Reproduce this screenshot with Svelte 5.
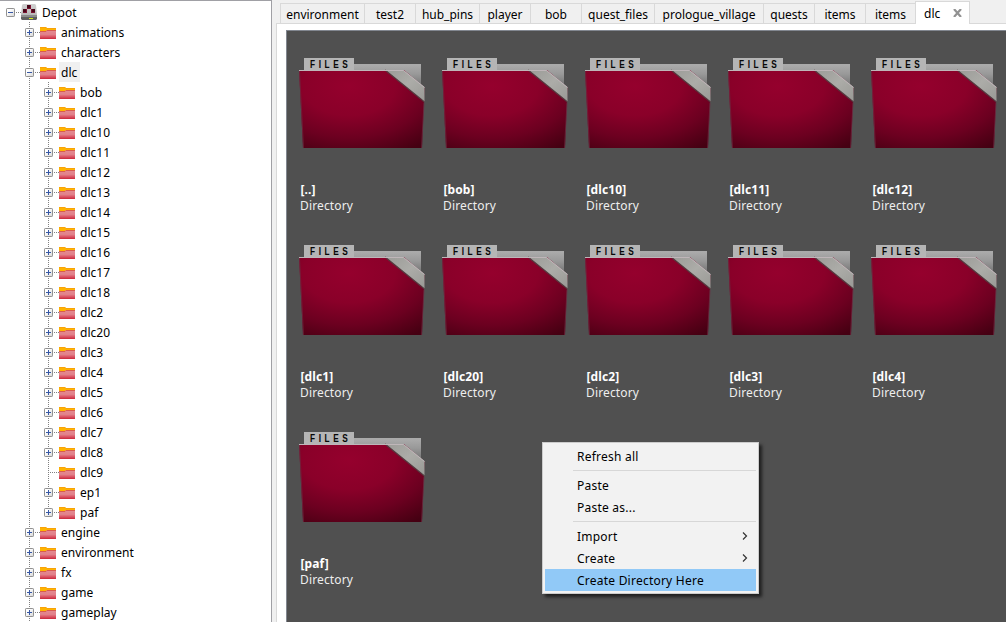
<script>
  const root = { name: 'Depot', level: 0, open: true };
  const node = (name, level, extra = {}) => ({ name, level, ...extra });
  const dlc = ['bob', 'dlc1', 'dlc10', 'dlc11', 'dlc12', 'dlc13', 'dlc14', 'dlc15', 'dlc16', 'dlc17', 'dlc18', 'dlc2', 'dlc20', 'dlc3', 'dlc4', 'dlc5', 'dlc6', 'dlc7', 'dlc8', 'dlc9', 'ep1', 'paf'];
  const rows = [
    root,
    node('animations', 1),
    node('characters', 1),
    node('dlc', 1, { open: true, selected: true }),
    ...dlc.map((n) => node(n, 2, { leaf: n === 'dlc9', last: n === 'paf' })),
    ...['engine', 'environment', 'fx', 'game', 'gameplay'].map((n) => node(n, 1))
  ];
  const tabs = [
    ['environment', 84], ['test2', 51], ['hub_pins', 64], ['player', 51], ['bob', 51], ['quest_files', 73],
    ['prologue_village', 109], ['quests', 51], ['items', 51], ['items', 50]
  ];
  const folders = ['..', 'bob', 'dlc10', 'dlc11', 'dlc12', 'dlc1', 'dlc20', 'dlc2', 'dlc3', 'dlc4', 'paf'];
  const menu = ['Refresh all', null, 'Paste', 'Paste as...', null, 'Import', 'Create', 'Create Directory Here'];
</script>

<svg class="defs" width="0" height="0" aria-hidden="true">
  <defs>
    <linearGradient id="box" x1="0" y1="0" x2="1" y2="1"><stop offset=".3" stop-color="#fff" /><stop offset="1" stop-color="#d5d5d5" /></linearGradient>
    <linearGradient id="mini" x1="0" y1="0" x2="0" y2="1"><stop offset="0" stop-color="#e48c93" /><stop offset=".5" stop-color="#e2808a" /><stop offset="1" stop-color="#d0283d" /></linearGradient>
    <linearGradient id="drive" x1="0" y1="0" x2="0" y2="1"><stop offset="0" stop-color="#d2d2d2" /><stop offset="1" stop-color="#b4b4b4" /></linearGradient>
    <radialGradient id="front" gradientUnits="userSpaceOnUse" cx="50" cy="25" r="116" gradientTransform="matrix(1 0 0 .64 0 12)">
      <stop offset="0" stop-color="#95002d" /><stop offset=".4" stop-color="#8a0029" /><stop offset=".7" stop-color="#6c0020" /><stop offset="1" stop-color="#450012" />
    </radialGradient>
    <linearGradient id="back" x1="0" y1="0" x2="0" y2="1"><stop offset="0" stop-color="#b8b8b8" /><stop offset=".5" stop-color="#999" /><stop offset="1" stop-color="#666" /></linearGradient>
    <linearGradient id="strip" x1="0" y1="0" x2="1" y2="1"><stop offset="0" stop-color="#9b9b97" /><stop offset=".5" stop-color="#acaca8" /><stop offset="1" stop-color="#999995" /></linearGradient>
  </defs>
</svg>

<div class="app">
  <aside class="tree">
    {#each rows as row}
      <div class="row">
        {#if row.level > 0}<span class="guide"></span>{/if}
        {#if row.level === 2}<span class="guide" class:last={row.last}></span>{/if}
        <span class="branch">
          {#if !row.leaf}
            <svg width="9" height="9" viewBox="0 0 9 9">
              <rect x=".5" y=".5" width="8" height="8" rx=".7" fill="url(#box)" stroke="#919191" />
              <path d={row.open ? 'M2 4.5h5' : 'M2 4.5h5M4.5 2v5'} stroke="#3657a5" />
            </svg>
          {/if}
        </span>
        {#if row.level === 0}
          <svg class="icon" width="16" height="16" viewBox="0 0 16 16">
            <path d="M2 0h12l1 1 1 10v2H0v-2L1 1z" fill="url(#drive)" />
            <path d="M0 11.5h16V15l-1 1H1l-1-1z" fill="#606060" /><path d="M0 11.5h16v1.5H0z" fill="#8d8d8d" />
            <path d="M6 1h4v4H6zM2 5h4v4H2zM10 5h4v4h-4z" fill="#7a1230" />
            <path d="M6 1h3v3H6zM2 5h3v3H2zM11 5h3v3h-3z" fill="#480719" />
            <path d="M8 14.5h4" stroke="#d5ef18" />
          </svg>
        {:else}
          <svg class="icon" width="16" height="16" viewBox="0 0 16 16">
            <path d="M0 3h6l1 1h9v11H0z" fill="#ffb400" />
            <path d="M0 3.5h6l1 1h9" fill="none" stroke="#f7a20a" />
            <path d="M0 7h6l1-1h9v9H0z" fill="url(#mini)" />
            <path d="M0 7.5h6l1-1h9" fill="none" stroke="#d95a50" />
            <path d="M0 14.5h16" fill="none" stroke="#cf3044" />
          </svg>
        {/if}
        <span class="name" class:selected={row.selected}>{row.name}</span>
      </div>
    {/each}
  </aside>

  <main>
    <nav>
      {#each tabs as [name, width]}
        <div class="tab" style:width="{width}px">{name}</div>
      {/each}
      <div class="tab active">
        <span>dlc</span>
        <svg width="9" height="8" viewBox="0 0 9 8"><path d="M1 0l7 8M8 0L1 8" stroke="#929292" stroke-width="2.2" /></svg>
      </div>
    </nav>
    <div class="page">
      <div class="grid">
        {#each folders as name}
          <div class="folder">
            <svg width="127" height="91" viewBox="0 0 127 91">
              <path d="M5 0h50v6h67v26H5z" fill="url(#back)" />
              <path d="M5 0h50v12H5z" fill="#b5b5b5" />
              <path d="M55 6h67v1H55z" fill="#aaa" />
              <text transform="translate(11 10) scale(.75 1)">FILES</text>
              <path d="M0 12h105l20.5 17.5L123 90H4z" fill="url(#front)" />
              <path d="M86 12h18.5l21 17v15z" fill="url(#strip)" />
              <path d="M86 12l39.500 32" stroke="#55383e" stroke-width="1.2" fill="none" />
              <path d="M0 12.5h104.5l21 17" stroke="#bfb6b9" fill="none" />
              <path d="M.5 13L4.5 90M125 45l-2.5 45" stroke="#6e2940" stroke-width=".7" fill="none" />
            </svg>
            <b>[{name}]</b>
            <span>Directory</span>
          </div>
        {/each}
      </div>
    </div>
  </main>

  <div class="menu">
    {#each menu as item}
      {#if item === null}
        <div class="sep"></div>
      {:else}
        <div class="item" class:hot={item === 'Create Directory Here'}>
          <span>{item}</span>
          {#if item === 'Import' || item === 'Create'}
            <svg width="6" height="8" viewBox="0 0 6 8"><path d="M1 .5L4.5 4 1 7.500" fill="none" stroke="#333" stroke-width="1.2" /></svg>
          {/if}
        </div>
      {/if}
    {/each}
  </div>
</div>

<style>
  :global(body) { margin: 0; overflow: hidden; }
  .defs { position: absolute; }
  .app {
    display: flex; width: 1006px; height: 622px; overflow: hidden; position: relative;
    background: #f0f0f0; color: #000; font: 12px/20px "Noto Sans", sans-serif; box-sizing: border-box;
  }
  .app :global(*) { box-sizing: border-box; }
  svg { display: block; flex: none; }
  .tree { width: 272px; flex: none; background: #fff; border-top: 1px solid #a0a0a5; border-right: 1px solid #a0a0a5; padding-top: 1px; overflow: hidden; letter-spacing: .03px; }
  .row { height: 20px; display: flex; align-items: center; padding-left: 6px; white-space: nowrap; }
  .guide {
    width: 1px; height: 20px; margin: 0 -5px 0 23px; flex: none;
    background: repeating-linear-gradient(#808080 0 1px, transparent 1px 2px);
  }
  .guide + .guide { margin-left: 23px; }
  .guide.last { height: 10px; align-self: flex-start; }
  .branch { width: 15px; height: 10px; margin-top: 2px; flex: none; background: repeating-linear-gradient(90deg, #808080 0 1px, transparent 1px 2px) 4px 4px / 11px 1px no-repeat; }
  .icon { margin-right: 3px; }
  .name { height: 20px; padding: 0 2px; line-height: 22px; }
  .selected { background: #f0f0f0; padding-right: 3px; }
  main { flex: 1; min-width: 0; display: flex; flex-direction: column; padding: 1px 0 0 4px; }
  nav { display: flex; height: 23px; flex: none; align-items: flex-end; padding-left: 4px; margin-bottom: -1px; position: relative; }
  .tab { height: 21px; border: 1px solid #d9d9d9; border-right: 0; line-height: 21px; text-align: center; white-space: nowrap; flex: none; }
  .tab.active { display: flex; align-items: center; justify-content: space-between; width: 55px; height: 23px; padding: 0 7px 0 8px; background: #fff; border-right: 1px solid #d9d9d9; border-bottom: 0; }
  .page { flex: 1; background: #fff; border: 1px solid #d9d9d9; border-width: 1px 0 0 1px; padding: 6px 0 0 9px; }
  .grid {
    height: 592px; border: 1px solid #828790; border-width: 1px 0 0 1px; background: #505050; color: #fff;
    display: grid; grid-template-columns: repeat(5, 143px); grid-auto-rows: 187px; padding: 27px 0 0 12px; overflow: hidden;
  }
  .folder { display: flex; flex-direction: column; line-height: 16px; }
  .folder text { font: bold 11px "Liberation Sans", sans-serif; letter-spacing: 4.8px; fill: #080808; }
  .folder b { margin: 33px 0 0 1.5px; letter-spacing: .1px; }
  .folder span { margin-left: 1px; color: #eee; letter-spacing: .15px; }
  .menu {
    position: absolute; left: 542px; top: 442px; width: 217px; height: 152px; padding: 2px; border: 1px solid #ccc;
    background: #f2f2f2; box-shadow: 3px 3px 3px rgba(0, 0, 0, .6);
  }
  .item { height: 22px; line-height: 20px; padding: 0 8px 0 32px; display: flex; align-items: center; justify-content: space-between; letter-spacing: .23px; }
  .item span { padding-top: 2px; }
  .hot { background: #91c9f7; }
  .sep { height: 1px; margin: 3px 0 3px 28px; background: #d7d7d7; }
</style>
